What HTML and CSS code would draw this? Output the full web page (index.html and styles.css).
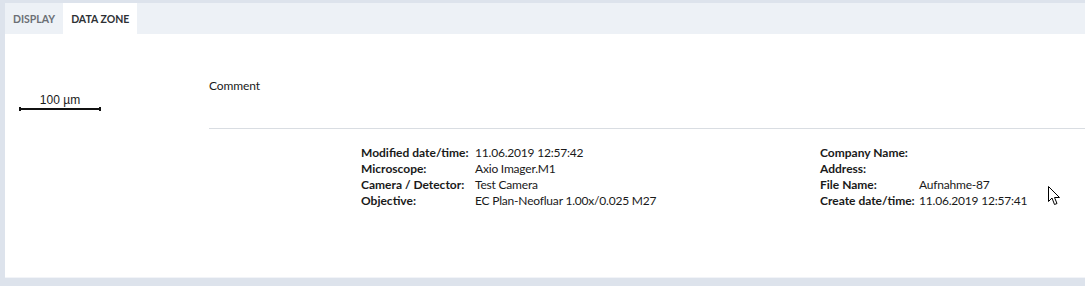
FILE: index.html
```html
<!DOCTYPE html>
<html lang="en">
<head>
    <meta charset="UTF-8">
    <title>Data Zone</title>
    <link rel="stylesheet" href="styles.css">
</head>
<body>
    <div class="frame">
        <div class="tabs">
            <a class="tab">DISPLAY</a>
            <a class="tab active">DATA ZONE</a>
        </div>

        <div class="panel">
            <div class="scale">
                <span class="scale-label">100 µm</span>
                <div class="scale-bar"></div>
            </div>

            <div class="info">
                <div class="comment">Comment</div>
                <div class="meta">
                    <div class="meta-block left">
                        <span class="key">Modified date/time:</span><span>11.06.2019 12:57:42</span>
                        <span class="key">Microscope:</span><span>Axio Imager.M1</span>
                        <span class="key">Camera / Detector:</span><span>Test Camera</span>
                        <span class="key">Objective:</span><span>EC Plan-Neofluar 1.00x/0.025 M27</span>
                    </div>
                    <div class="meta-block right">
                        <span class="key">Company Name:</span><span></span>
                        <span class="key">Address:</span><span></span>
                        <span class="key">File Name:</span><span>Aufnahme-87</span>
                        <span class="key">Create date/time:</span><span>11.06.2019 12:57:41</span>
                    </div>
                </div>
            </div>

            <!-- mouse pointer left in the screenshot -->
            <svg class="cursor" width="13" height="20" viewBox="0 0 13 20">
                <path d="M0.5 0.5 L0.5 15.5 L4 12 L6.5 18.5 L9 17.5 L6.5 11.5 L11.5 11.5 Z" fill="#fff" stroke="#000" stroke-width="1"/>
            </svg>
        </div>
    </div>
</body>
</html>
```

FILE: styles.css
```css
* {
    margin: 0;
    padding: 0;
    box-sizing: border-box;
}

body {
    font-family: Lato, "Noto Sans", Arial, sans-serif;
    font-size: 12px;
    color: #1a1a1a;
    background-color: #dde3ec;
    width: 1085px;
    height: 286px;
    overflow: hidden;
    white-space: nowrap;
}

.frame {
    padding: 3px 0 7px 5px;
}

/* Tabs */
.tabs {
    display: flex;
    height: 31px;
    background-color: #edf1f6;
}

.tab {
    display: flex;
    align-items: center;
    padding: 0 8px;
    font-size: 10.5px;
    font-weight: bold;
    color: #6b6f75;
}

.tab.active {
    background-color: #ffffff;
    color: #2e3135;
}

/* Panel */
.panel {
    position: relative;
    display: flex;
    height: 244px;
    background-color: #ffffff;
    border-bottom: 1px solid #f2f4f8;
}

.scale {
    width: 204px;
    padding: 59px 0 0 14px;
}

.scale-label {
    display: block;
    width: 82px;
    text-align: center;
    font-family: "Liberation Sans", Arial, sans-serif;
    font-size: 12px;
    line-height: 14px;
}

.scale-bar {
    position: relative;
    width: 82px;
    height: 2px;
    margin-top: 1px;
    background-color: #111;
}

.scale-bar::before,
.scale-bar::after {
    content: "";
    position: absolute;
    top: -1px;
    width: 2px;
    height: 4px;
    background-color: #111;
}

.scale-bar::before {
    left: 0;
}

.scale-bar::after {
    right: 0;
}

.info {
    flex: 1;
    padding-top: 44px;
}

.comment {
    line-height: 16px;
    height: 51px;
    border-bottom: 1px solid #d9dde2;
    letter-spacing: -0.1px;
}

.meta {
    display: flex;
    padding: 16px 0 0 152px;
}

.meta-block {
    display: grid;
    line-height: 16px;
    grid-auto-rows: 16px;
    letter-spacing: -0.2px;
}

.meta-block.left {
    width: 459px;
    grid-template-columns: 114px 1fr;
}

.meta-block.right {
    grid-template-columns: 99px 1fr;
}

.key {
    font-weight: bold;
    letter-spacing: 0;
}

.cursor {
    position: absolute;
    left: 1043px;
    top: 152px;
}
```
